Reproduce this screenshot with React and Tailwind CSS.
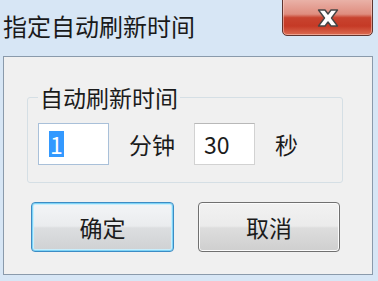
export default function App() {
  const font = { fontFamily: '"Noto Sans CJK SC", "Noto Sans", sans-serif' };
  return (
    <div className="relative w-[378px] h-[281px] overflow-hidden bg-[#d7e6f5] text-[#1b1b1b]" style={font}>
      <div className="h-[56px] flex items-center pl-[3px]">
        <span className="text-[24px] leading-[28px] -mt-[5px] text-[#1a1a1a]">指定自动刷新时间</span>
      </div>
      <div className="absolute left-[282px] top-[-2px] w-[91px] h-[38px] rounded-b-[5px] border border-[#5e3530] bg-[linear-gradient(to_bottom,#eab4aa_0%,#df8d7f_42%,#c8432f_52%,#c53a26_75%,#dc6c52_100%)] shadow-[inset_0_0_0_1px_rgba(255,220,210,0.5)] flex items-center justify-center">
        <svg width="24" height="20" viewBox="0 0 24 20" className="mt-[2px]">
          <path d="M2.5 2 L9 2 L12 6 L15 2 L21.5 2 L15.5 10 L21.5 18 L15 18 L12 14 L9 18 L2.5 18 L8.5 10 Z" fill="#ffffff" stroke="#454545" strokeWidth="1.4" strokeLinejoin="round" />
        </svg>
      </div>
      <div className="ml-[3px] w-[370px] h-[219px] border border-[#8a9aab] bg-[#f0f0f0] flex flex-col">
        <fieldset className="ml-[23px] mt-[29px] w-[316px] border border-[#d5dfe5] rounded-[3px] pl-[10px] pb-[17px]">
          <legend className="px-[2px] text-[23px] leading-[22px] text-[#1b1b1b]">自动刷新时间</legend>
          <div className="flex items-center mt-[15px]">
            <div className="w-[71px] h-[42px] border border-[#a9c0d9] bg-white flex items-center pl-[10px]">
              <span className="bg-[#3399ff] text-white text-[23px] leading-[26px] px-[1px]">1</span>
            </div>
            <span className="ml-[20px] w-[65px] text-[23px] leading-[28px]">分钟</span>
            <div className="w-[61px] h-[42px] border border-[#d2d2d2] border-t-[#b8b8b8] bg-white flex items-center pl-[9px]">
              <span className="text-[23px] leading-[26px]">30</span>
            </div>
            <span className="ml-[20px] text-[23px] leading-[28px]">秒</span>
          </div>
        </fieldset>
        <div className="flex ml-[27px] mt-[19px] gap-[24px]">
          <div className="w-[143px] h-[50px] rounded-[4px] border border-[#3c8cc4] shadow-[inset_0_0_0_1px_#7ed3f6,inset_0_0_0_2px_#c9eefc] bg-[linear-gradient(to_bottom,#f3f5f7_0%,#eaecee_48%,#dcdee0_52%,#cfd1d3_100%)] flex items-center justify-center">
            <span className="text-[23px] leading-[28px]">确定</span>
          </div>
          <div className="w-[142px] h-[50px] rounded-[4px] border border-[#707070] shadow-[inset_0_0_0_1px_#fbfbfb] bg-[linear-gradient(to_bottom,#f2f2f2_0%,#ebebeb_48%,#dddddd_52%,#cfcfcf_100%)] flex items-center justify-center">
            <span className="text-[23px] leading-[28px]">取消</span>
          </div>
        </div>
      </div>
    </div>
  );
}
